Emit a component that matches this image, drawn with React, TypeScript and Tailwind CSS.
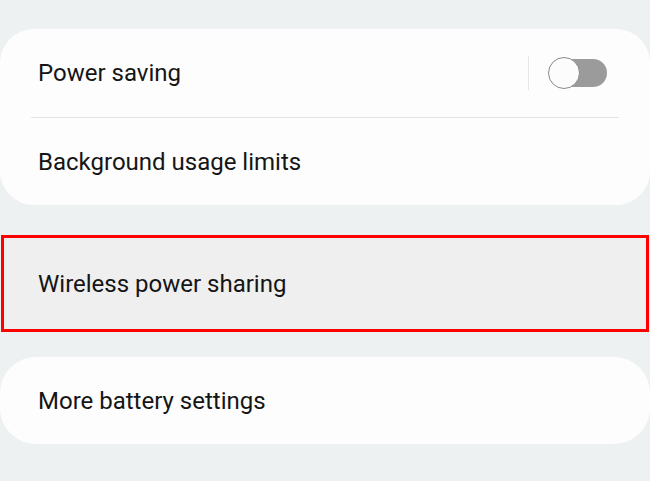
import React from "react";

const rowText = "text-[24px] text-[#151515] leading-none";

const Toggle = () => (
  <div className="flex items-center gap-[19px]">
    <div className="w-px h-[34px] bg-[#e6e6e6]" />
    <div className="relative w-[59px] h-[32px] flex items-center">
      <div className="absolute right-0 w-[48px] h-[28px] rounded-full bg-[#9b9b9b]" />
      <div className="relative w-[32px] h-[32px] rounded-full bg-[#fcfcfc] border-[1.5px] border-[#8a8a8a]" />
    </div>
  </div>
);

export default function App() {
  return (
    <div
      className="w-[650px] h-[481px] bg-[#eef1f2] pt-[29px] flex flex-col overflow-hidden"
      style={{ fontFamily: "Roboto, 'Liberation Sans', sans-serif" }}>
      {/* first group */}
      <div className="bg-[#fdfdfd] rounded-[34px] flex flex-col">
        <div className="h-[88px] flex items-center justify-between pl-[38px] pr-[43px]">
          <span className={rowText}>Power saving</span>
          <Toggle />
        </div>
        <div className="h-px bg-[#e4e4e4] mx-[31px]" />
        <div className="h-[87px] flex items-center pl-[38px]">
          <span className={rowText}>Background usage limits</span>
        </div>
      </div>

      {/* highlighted item */}
      <div className="mt-[30px] mx-px border-[3px] border-[#ff0000] h-[97px] flex">
        <div className="flex-1 bg-[#efefef] rounded-[6px] flex items-center pl-[34px]">
          <span className={rowText}>Wireless power sharing</span>
        </div>
      </div>

      {/* last group */}
      <div className="mt-[25px] bg-[#fdfdfd] rounded-[36px] h-[87px] flex items-center pl-[38px]">
        <span className={rowText}>More battery settings</span>
      </div>
    </div>
  );
}
